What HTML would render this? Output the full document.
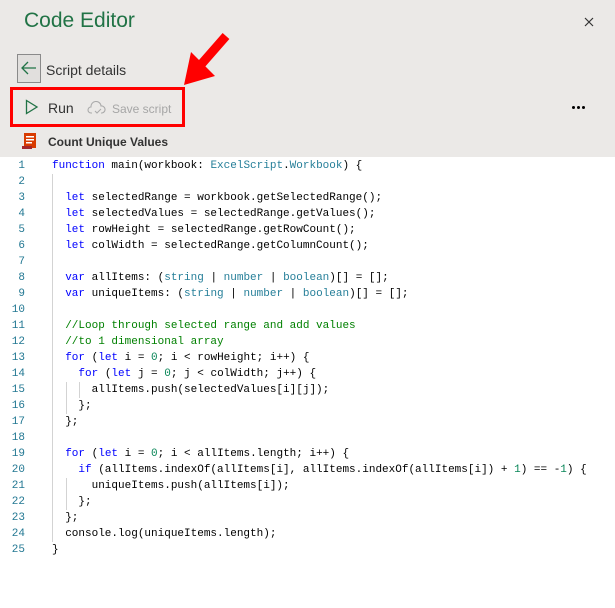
<!DOCTYPE html>
<html><head><style>
body{margin:0;width:615px;height:608px;background:#fff;font-family:"Liberation Sans",sans-serif;position:relative;overflow:hidden}
.hdr{position:absolute;left:0;top:0;width:615px;height:157px;background:#ebe9e7}
.title{position:absolute;left:24px;top:9px;font-size:21px;color:#217346}
.x{position:absolute;left:584px;top:17px}
.back{position:absolute;left:17px;top:54px;width:22px;height:27px;border:1px solid #8a8a8a;background:#e1dfdd}
.sd{position:absolute;left:46px;top:62px;font-size:14px;color:#333}
.red{position:absolute;left:10px;top:87px;width:175px;height:40px;border:3px solid #f00;box-sizing:border-box}
.run{position:absolute;left:48px;top:100px;font-size:14px;color:#333}
.save{position:absolute;left:112px;top:102px;font-size:12px;color:#a6a6a6}
.cuv{position:absolute;left:48px;top:135px;font-size:12px;font-weight:bold;color:#333}
.code{position:absolute;left:0;top:158px;font-family:"Liberation Mono",monospace;font-size:11px;line-height:16px;white-space:pre;color:#000}
.ln{position:absolute;left:0;width:25px;text-align:right;color:#237893}
.c{position:absolute;left:52px}
.k{color:#0000ff}.t{color:#267f99}.n{color:#098658}.cm{color:#008000}
.g{position:absolute;width:1px;background:#d3d3d3}
.dots{position:absolute;left:572px;top:106px;display:flex}
.dots i{display:block;width:3px;height:3px;background:#000;border-radius:50%;margin-right:2px}
</style></head><body>
<div class="hdr"></div>
<div class="title">Code Editor</div>
<svg class="x" width="10" height="10"><path d="M1 1L9 9M9 1L1 9" stroke="#333" stroke-width="1.2"/></svg>
<div class="back"></div>
<svg style="position:absolute;left:20px;top:60px" width="18" height="16"><path d="M2 8H16M8 2L2 8L8 14" stroke="#217346" stroke-width="1.3" fill="none"/></svg>
<div class="sd">Script details</div>
<div class="red"></div>
<svg style="position:absolute;left:25px;top:99px" width="14" height="16"><path d="M1.5 1.5L12 8L1.5 14.5Z" stroke="#217346" stroke-width="1.3" fill="none"/></svg>
<div class="run">Run</div>
<svg style="position:absolute;left:87px;top:101px" width="20" height="14"><path d="M5 12H4a3 3 0 0 1 0-6a5 5 0 0 1 10-1a3.5 3.5 0 0 1 1 7h-1" stroke="#aaa" stroke-width="1.1" fill="none"/><path d="M8 10l2 2l4-4" stroke="#aaa" fill="none"/></svg>
<div class="save">Save script</div>
<svg style="position:absolute;left:178px;top:30px" width="55" height="60"><path d="M48 6L20 38" stroke="#f00" stroke-width="9"/><path d="M6 55L13 22L37 46Z" fill="#f00"/></svg>
<svg style="position:absolute;left:22px;top:132px" width="16" height="18"><rect x="2" y="1" width="12" height="15" fill="#d83b01"/><rect x="4" y="4" width="8" height="1.5" fill="#fff"/><rect x="4" y="7" width="8" height="1.5" fill="#fff"/><rect x="4" y="10" width="6" height="1.5" fill="#fff"/><rect x="0" y="14" width="10" height="3" fill="#a4262c"/></svg>
<div class="cuv">Count Unique Values</div>
<div class="dots"><i></i><i></i><i></i></div>
<div class="g" style="left:52px;top:174px;height:368px"></div>
<div class="g" style="left:66px;top:382px;height:32px"></div>
<div class="g" style="left:79px;top:382px;height:16px"></div>
<div class="g" style="left:66px;top:478px;height:32px"></div>
<div class="code"><div class="ln">1
2
3
4
5
6
7
8
9
10
11
12
13
14
15
16
17
18
19
20
21
22
23
24
25</div><div class="c"><span class="k">function</span> main(workbook: <span class="t">ExcelScript</span>.<span class="t">Workbook</span>) {

  <span class="k">let</span> selectedRange = workbook.getSelectedRange();
  <span class="k">let</span> selectedValues = selectedRange.getValues();
  <span class="k">let</span> rowHeight = selectedRange.getRowCount();
  <span class="k">let</span> colWidth = selectedRange.getColumnCount();

  <span class="k">var</span> allItems: (<span class="t">string</span> | <span class="t">number</span> | <span class="t">boolean</span>)[] = [];
  <span class="k">var</span> uniqueItems: (<span class="t">string</span> | <span class="t">number</span> | <span class="t">boolean</span>)[] = [];

  <span class="cm">//Loop through selected range and add values</span>
  <span class="cm">//to 1 dimensional array</span>
  <span class="k">for</span> (<span class="k">let</span> i = <span class="n">0</span>; i &lt; rowHeight; i++) {
    <span class="k">for</span> (<span class="k">let</span> j = <span class="n">0</span>; j &lt; colWidth; j++) {
      allItems.push(selectedValues[i][j]);
    };
  };

  <span class="k">for</span> (<span class="k">let</span> i = <span class="n">0</span>; i &lt; allItems.length; i++) {
    <span class="k">if</span> (allItems.indexOf(allItems[i], allItems.indexOf(allItems[i]) + <span class="n">1</span>) == -<span class="n">1</span>) {
      uniqueItems.push(allItems[i]);
    };
  };
  console.log(uniqueItems.length);
}</div></div>
</body></html>
